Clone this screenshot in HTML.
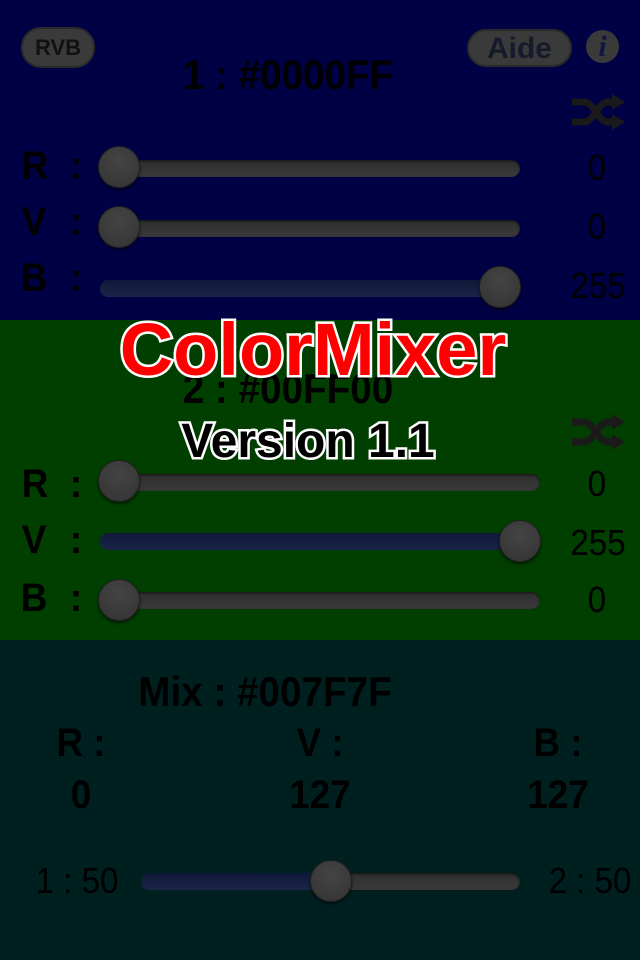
<!DOCTYPE html>
<html><head><meta charset="utf-8"><style>
*{margin:0;padding:0;box-sizing:border-box}
body{width:640px;height:960px;position:relative;overflow:hidden;font-family:"Liberation Sans",sans-serif;color:#000}
.sec{position:absolute;left:0;width:640px}
.t{position:absolute;white-space:nowrap;transform:translate(-50%,-50%) scaleX(.92);line-height:1}
.b{font-weight:bold}
.track{position:absolute;height:17px;border-radius:9px;background:linear-gradient(#2e2e2e,#3a3a3a);box-shadow:inset 0 1px 2px #111}
.fill{position:absolute;height:17px;border-radius:9px;background:linear-gradient(#0f1838,#1a2548)}
.thumb{position:absolute;width:42px;height:42px;border-radius:50%;background:radial-gradient(circle at 50% 35%,#444,#333);box-shadow:0 2px 3px rgba(0,0,0,.6);border:1px solid #222}
.btn{position:absolute;border-radius:20px;background:#3a3a3a;border:2px solid #2a2a2a;font-weight:bold;text-align:center}
</style></head><body>
<div class="sec" style="top:0;height:320px;background:#000045"></div>
<div class="sec" style="top:320px;height:320px;background:#003f00"></div>
<div class="sec" style="top:640px;height:320px;background:#002020"></div>

<div class="btn" style="left:21px;top:27px;width:74px;height:41px;line-height:37px;font-size:22px;color:#111">RVB</div>
<div class="btn" style="left:467px;top:29px;width:105px;height:38px;line-height:35px;font-size:30px;color:#161b2c">Aide</div>
<div style="position:absolute;left:586px;top:30px;width:33px;height:33px;border-radius:50%;background:#3a3a3a;color:#10163e;font:italic bold 30px 'Liberation Serif',serif;text-align:center;line-height:34px">i</div>

<svg style="position:absolute;left:570px;top:94px" width="56" height="36" viewBox="0 0 56 36"><g fill="none" stroke="#1a1a1a" stroke-width="7"><path d="M2 8h12c10 0 14 20 24 20h6"/><path d="M2 28h12c10 0 14-20 24-20h6"/></g><path d="M42 0l13 8-13 8zM42 20l13 8-13 8z" fill="#1a1a1a"/></svg>
<svg style="position:absolute;left:570px;top:414px" width="56" height="36" viewBox="0 0 56 36"><g fill="none" stroke="#1a1a1a" stroke-width="7"><path d="M2 8h12c10 0 14 20 24 20h6"/><path d="M2 28h12c10 0 14-20 24-20h6"/></g><path d="M42 0l13 8-13 8zM42 20l13 8-13 8z" fill="#1a1a1a"/></svg>

<div class="t b" style="left:288px;top:75px;font-size:42px">1 : #0000FF</div>
<div class="t b" style="left:35px;top:166px;font-size:40px">R</div><div class="t b" style="left:76px;top:166px;font-size:40px">:</div>
<div class="t b" style="left:34px;top:222px;font-size:40px">V</div><div class="t b" style="left:76px;top:222px;font-size:40px">:</div>
<div class="t b" style="left:34px;top:278px;font-size:40px">B</div><div class="t b" style="left:76px;top:278px;font-size:40px">:</div>
<div class="track" style="left:100px;top:160px;width:420px"></div><div class="thumb" style="left:98px;top:146px"></div>
<div class="track" style="left:100px;top:220px;width:420px"></div><div class="thumb" style="left:98px;top:206px"></div>
<div class="track" style="left:100px;top:280px;width:420px"></div><div class="fill" style="left:100px;top:280px;width:410px"></div><div class="thumb" style="left:479px;top:266px"></div>
<div class="t" style="left:597px;top:168px;font-size:36px">0</div>
<div class="t" style="left:597px;top:227px;font-size:36px">0</div>
<div class="t" style="left:598px;top:286px;font-size:36px">255</div>

<div class="t b" style="left:288px;top:389px;font-size:42px">2 : #00FF00</div>
<div class="t b" style="left:35px;top:484px;font-size:40px">R</div><div class="t b" style="left:76px;top:484px;font-size:40px">:</div>
<div class="t b" style="left:34px;top:540px;font-size:40px">V</div><div class="t b" style="left:76px;top:540px;font-size:40px">:</div>
<div class="t b" style="left:34px;top:598px;font-size:40px">B</div><div class="t b" style="left:76px;top:598px;font-size:40px">:</div>
<div class="track" style="left:100px;top:474px;width:440px"></div><div class="thumb" style="left:98px;top:460px"></div>
<div class="track" style="left:100px;top:533px;width:440px"></div><div class="fill" style="left:100px;top:533px;width:430px"></div><div class="thumb" style="left:499px;top:520px"></div>
<div class="track" style="left:100px;top:592px;width:440px"></div><div class="thumb" style="left:98px;top:579px"></div>
<div class="t" style="left:597px;top:484px;font-size:36px">0</div>
<div class="t" style="left:598px;top:543px;font-size:36px">255</div>
<div class="t" style="left:597px;top:600px;font-size:36px">0</div>

<div class="t b" style="left:265px;top:692px;font-size:42px">Mix : #007F7F</div>
<div class="t b" style="left:81px;top:743px;font-size:40px">R :</div>
<div class="t b" style="left:320px;top:743px;font-size:40px">V :</div>
<div class="t b" style="left:558px;top:743px;font-size:40px">B :</div>
<div class="t b" style="left:81px;top:795px;font-size:40px">0</div>
<div class="t b" style="left:320px;top:795px;font-size:40px">127</div>
<div class="t b" style="left:558px;top:795px;font-size:40px">127</div>
<div class="t" style="left:77px;top:881px;font-size:36px">1 : 50</div>
<div class="t" style="left:590px;top:881px;font-size:36px">2 : 50</div>
<div class="track" style="left:141px;top:873px;width:379px"></div><div class="fill" style="left:141px;top:873px;width:190px"></div><div class="thumb" style="left:310px;top:860px"></div>

<div class="t b" style="left:313px;top:350px;font-size:74px;color:#f00;-webkit-text-stroke:5px #fff;paint-order:stroke fill;transform:translate(-50%,-50%)">ColorMixer</div>
<div class="t b" style="left:308px;top:442px;font-size:48px;color:#000;-webkit-text-stroke:5px #fff;paint-order:stroke fill;transform:translate(-50%,-50%)">Version 1.1</div>
</body></html>
